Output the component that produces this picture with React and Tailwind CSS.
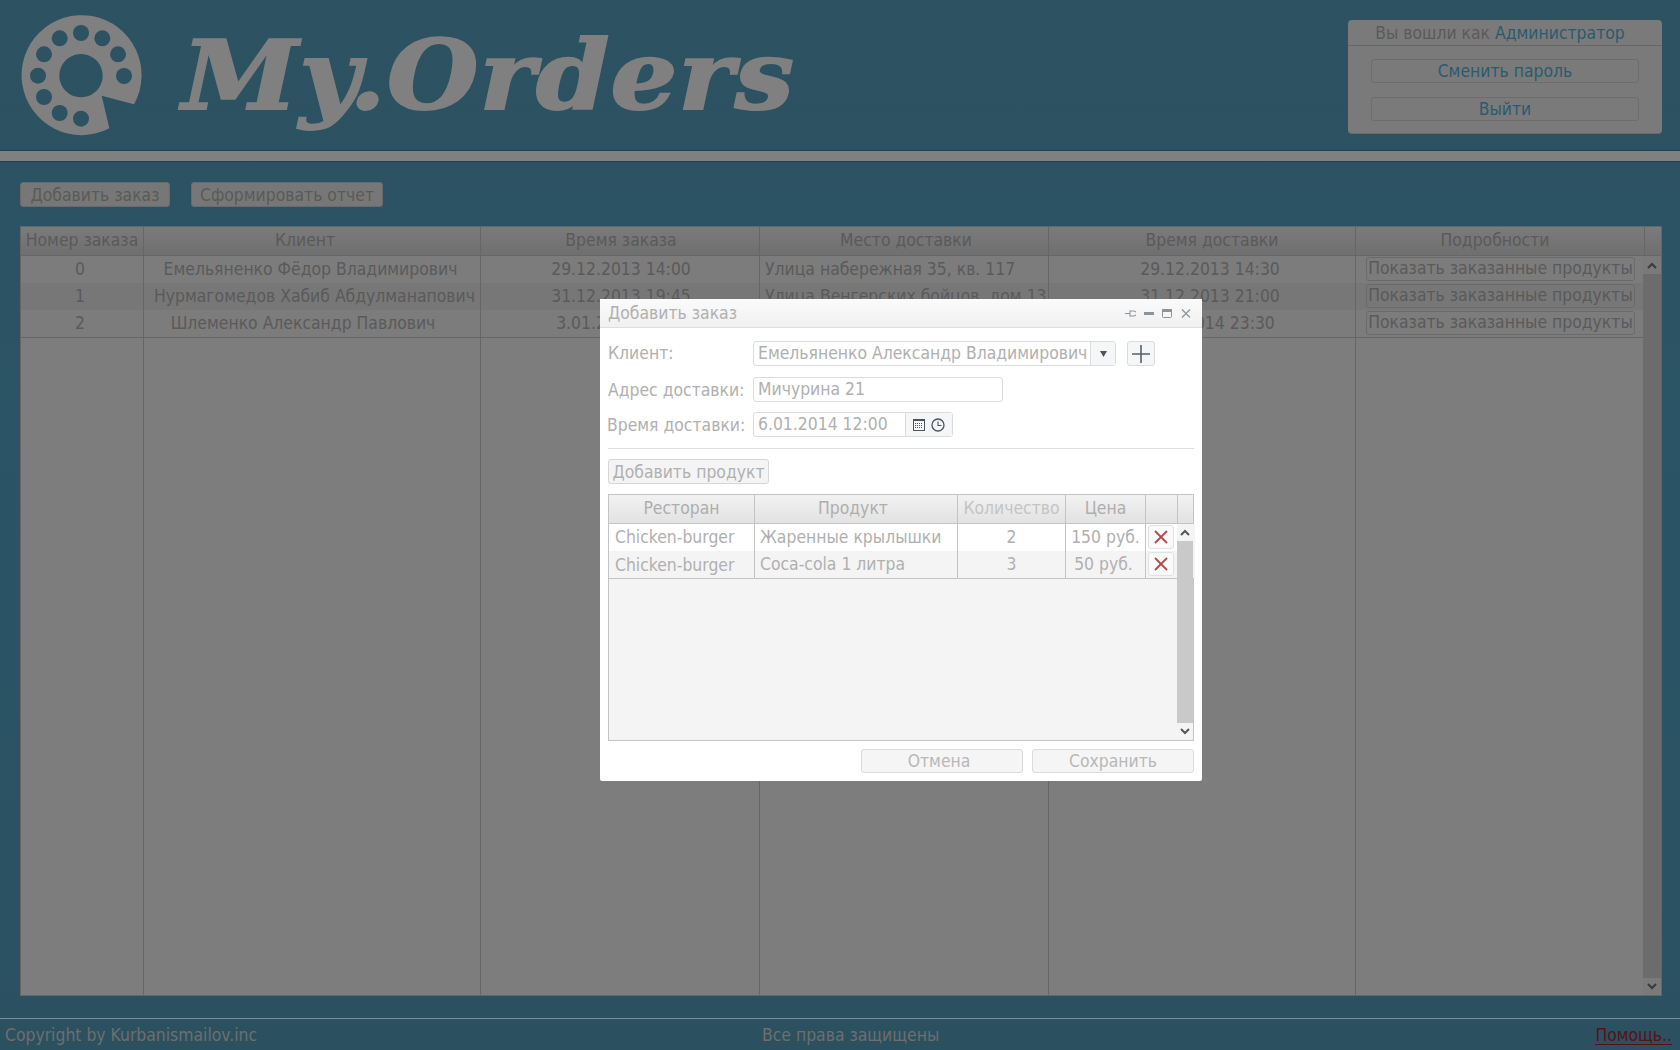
import React from "react";

const mainCols = "grid grid-cols-[123px_337px_279px_289px_307px_289px_18px]";
const dlgCols = "grid grid-cols-[146px_203px_108px_80px_32px_17px]";

function Logo() {
  const holes = [[213,84],[277,100],[324,148],[342,213],[149,100],[102,148],[84,212],[102,276],[149,324],[213,341]];
  return (
    <svg width="150" height="140" viewBox="0 0 450 420" className="shrink-0 ml-[10px] mt-[5px]">
      <path fill="#808080" fillRule="evenodd" d="M372 298A180 180 0 1 0 298 370L275 272ZM213 147a65 65 0 1 0 0.01 0Z" />
      {holes.map(([x, y]) => <circle key={x + "-" + y} cx={x} cy={y} r="24" fill="#2d5261" />)}
    </svg>
  );
}

function Chevron({ up, color = "#3a3a3a" }) {
  return (
    <svg width="10" height="7" viewBox="0 0 10 7">
      <path d={up ? "M1 6L5 2L9 6" : "M1 1L5 5L9 1"} fill="none" stroke={color} strokeWidth="2" />
    </svg>
  );
}

function Row({ cells, alt, nameCls = "" }) {
  return (
    <div className={`${mainCols} h-[27px] ${alt ? "bg-[#777777]" : "bg-[#7c7c7c]"}`}>
      <div className="text-center pr-[4px] border-r border-[#666]">{cells[0]}</div>
      <div className={`text-center whitespace-nowrap border-r border-[#666] ${nameCls}`}>{cells[1]}</div>
      <div className="text-center pl-[2px] border-r border-[#666]">{cells[2]}</div>
      <div className="pl-[5px] whitespace-nowrap overflow-hidden border-r border-[#666]">{cells[3]}</div>
      <div className="text-center pl-[16px] border-r border-[#666]">{cells[4]}</div>
      <div className="pl-[10px] pt-[1px]">
        <div className="w-[269px] h-[24px] flex items-center justify-center border border-[#6a6a6a] rounded-[3px] leading-none whitespace-nowrap">Показать заказанные продукты</div>
      </div>
    </div>
  );
}

function DlgRow({ r, p, q, c, alt }) {
  return (
    <div className={`${dlgCols} h-[27px] items-stretch leading-[26px] ${alt ? "bg-[#f4f4f4]" : "bg-white"}`}>
      <div className={`pl-[6px] border-r border-[#c4c4c4] ${alt ? "pt-[1px]" : ""}`}>{r}</div>
      <div className="pl-[5px] border-r border-[#c4c4c4]">{p}</div>
      <div className="text-center border-r border-[#c4c4c4]">{q}</div>
      <div className={`text-center border-r border-[#c4c4c4] whitespace-nowrap ${alt ? "pr-[4px]" : ""}`}>{c}</div>
      <div className="pl-[2px] pt-[1px]">
        <div className="w-[26px] h-[24px] flex items-center justify-center border border-[#e2e2e2] rounded-[3px] bg-[#fafafa]">
          <svg width="14" height="14" viewBox="0 0 14 14"><path d="M1 1L13 13M13 1L1 13" stroke="#b24a4a" strokeWidth="1.8" /></svg>
        </div>
      </div>
      <div className="bg-[#f4f4f4]" />
    </div>
  );
}

function Dialog() {
  return (
    <div className="absolute left-[600px] top-[299px] w-[602px] h-[482px] bg-white flex flex-col text-[#b0b0b0] rounded-[2px]">
      <div className="h-[29px] shrink-0 flex items-center justify-between pl-[8px] pr-[11px] border-b border-[#dedede] bg-gradient-to-b from-[#fbfbfb] to-[#f0f0f0]">
        <span>Добавить заказ</span>
        <div className="flex items-center gap-[8px] text-[#8a949c]">
          <svg width="11" height="9" viewBox="0 0 11 9"><path d="M0 4.5H5M5 1.5V7.5M5 2H9A2 2 0 0 1 9 7H5" fill="none" stroke="currentColor" /></svg>
          <svg width="10" height="9" viewBox="0 0 10 9"><rect x="0" y="3" width="10" height="3" fill="currentColor" /></svg>
          <svg width="11" height="9" viewBox="0 0 11 9"><rect x="0.5" y="0.5" width="9" height="8" rx="1" fill="none" stroke="currentColor" /><rect x="0" y="0" width="10" height="3" fill="currentColor" /></svg>
          <svg width="10" height="9" viewBox="0 0 10 9"><path d="M1 0.5L9 8.5M9 0.5L1 8.5" stroke="currentColor" strokeWidth="1.2" /></svg>
        </div>
      </div>

      <div className="flex flex-col pl-[8px] pr-[8px] pt-[13px] flex-1 min-h-0">
        <div className="flex items-center h-[25px]">
          <span className="w-[145px] mb-[2px]">Клиент:</span>
          <div className="w-[363px] h-[25px] flex border border-[#dcdcdc] rounded-[3px]">
            <span className="flex-1 pl-[4px] leading-[22px] whitespace-nowrap overflow-hidden">Емельяненко Александр Владимирович</span>
            <div className="w-[25px] flex items-center justify-center border-l border-[#dcdcdc] bg-[#f5f6f7]">
              <svg width="7" height="6" viewBox="0 0 7 6"><path d="M0 0H7L3.5 6Z" fill="#4a5560" /></svg>
            </div>
          </div>
          <div className="ml-[11px] w-[28px] h-[25px] flex items-center justify-center border border-[#dcdcdc] rounded-[3px] bg-[#f5f6f7]">
            <svg width="20" height="20" viewBox="0 0 20 20"><path d="M10 1V19M1 10H19" stroke="#56626e" strokeWidth="1.6" /></svg>
          </div>
        </div>
        <div className="flex items-center h-[25px] mt-[11px]">
          <span className="w-[145px] whitespace-nowrap">Адрес доставки:</span>
          <div className="w-[250px] h-[25px] pl-[4px] leading-[22px] border border-[#dcdcdc] rounded-[3px]">Мичурина 21</div>
        </div>
        <div className="flex items-center h-[25px] mt-[10px]">
          <span className="w-[145px] -ml-[1px] mr-[1px] whitespace-nowrap">Время доставки:</span>
          <div className="w-[200px] h-[25px] flex border border-[#dcdcdc] rounded-[3px]">
            <span className="flex-1 pl-[4px] leading-[22px]">6.01.2014 12:00</span>
            <div className="w-[47px] flex items-center justify-center gap-[6px] border-l border-[#dcdcdc] bg-[#f5f6f7]">
              <svg width="12" height="13" viewBox="0 0 12 13">
                <rect x="0.5" y="1.5" width="11" height="11" fill="none" stroke="#4a5560" />
                <rect x="0.5" y="1" width="11" height="2" fill="#4a5560" />
                <path d="M2 5.5H10M2 7.5H10M2 9.5H10" stroke="#4a5560" strokeWidth="1" strokeDasharray="1 1" />
              </svg>
              <svg width="14" height="14" viewBox="0 0 14 14">
                <circle cx="7" cy="7" r="6" fill="none" stroke="#4a5560" strokeWidth="1.3" />
                <path d="M7 3.5V7.5H10.5" fill="none" stroke="#4a5560" strokeWidth="1.1" />
              </svg>
            </div>
          </div>
        </div>
        <div className="h-px bg-[#dedede] mt-[11px]" />
        <div className="mt-[10px] w-[161px] h-[25px] flex items-center justify-center border border-[#d6d6d6] rounded-[3px] bg-[#f4f4f4] whitespace-nowrap">Добавить продукт</div>

        <div className="mt-[10px] h-[247px] flex flex-col border border-[#c4c4c4] bg-[#f4f4f4]">
          <div className={`${dlgCols} h-[29px] shrink-0 border-b border-[#c4c4c4] bg-gradient-to-b from-[#f2f2f2] to-[#e2e2e2] leading-[26px] text-center text-[#aeaeae]`}>
            <div className="border-r border-[#c4c4c4]">Ресторан</div>
            <div className="border-r border-[#c4c4c4] pr-[6px]">Продукт</div>
            <div className="border-r border-[#c4c4c4] text-[#c4c4c4] whitespace-nowrap">Количество</div>
            <div className="border-r border-[#c4c4c4]">Цена</div>
            <div className="border-r border-[#c4c4c4]" />
            <div />
          </div>
          <div className="relative flex-1 min-h-0">
            <div className="border-b border-[#c4c4c4]">
              <DlgRow r="Chicken-burger" p="Жаренные крылышки" q="2" c="150 руб." />
              <DlgRow r="Chicken-burger" p="Coca-cola 1 литра" q="3" c="50 руб." alt />
            </div>
            <div className="absolute right-0 top-0 bottom-0 w-[16px] flex flex-col bg-[#f4f4f4]">
              <div className="h-[17px] flex items-center justify-center"><Chevron up color="#555" /></div>
              <div className="flex-1 bg-[#c9c9c9]" />
              <div className="h-[17px] flex items-center justify-center"><Chevron color="#555" /></div>
            </div>
          </div>
        </div>

        <div className="flex justify-end gap-[9px] mt-[8px] text-[#b8b8b8]">
          <div className="w-[162px] h-[24px] flex items-center justify-center border border-[#dcdcdc] rounded-[3px] bg-[#f5f5f5] pr-[6px]">Отмена</div>
          <div className="w-[162px] h-[24px] flex items-center justify-center border border-[#dcdcdc] rounded-[3px] bg-[#f5f5f5]">Сохранить</div>
        </div>
      </div>
    </div>
  );
}

export default function App() {
  return (
    <div className="relative w-[1680px] h-[1050px] overflow-hidden flex flex-col text-[17.4px] leading-[26px] text-[#5a5a5a] bg-gradient-to-b from-[#2d5261] via-[#2a5466] to-[#2b5161] font-['DejaVu_Sans_Condensed','DejaVu_Sans',sans-serif]">
      <header className="h-[150px] shrink-0 flex items-start">
        <Logo />
        <div className="ml-[22px] mt-[11px] origin-left scale-x-[1.105] text-[#808080] text-[95px] leading-[130px] tracking-[1px] font-bold italic font-['DejaVu_Serif',serif] [-webkit-text-stroke:2px_#808080] whitespace-nowrap">My.Orders</div>
        <div className="ml-auto mr-[18px] mt-[20px] w-[314px] h-[114px] bg-[#7a7a7a] rounded-[4px] flex flex-col items-center border-b border-[#6a6a6a]">
          <div className="w-full h-[26px] pr-[10px] border-b border-[#666] text-center leading-[26px] whitespace-nowrap">Вы вошли как <span className="text-[#2b5a6e]">Администратор</span></div>
          <div className="mt-[13px] w-[268px] h-[24px] flex items-center justify-center border border-[#6d6d6d] rounded-[3px] text-[#2b5a6e]">Сменить пароль</div>
          <div className="mt-[14px] w-[268px] h-[24px] flex items-center justify-center border border-[#6d6d6d] rounded-[3px] text-[#2b5a6e]">Выйти</div>
        </div>
      </header>
      <div className="h-[12px] shrink-0 bg-[#808080] border-y border-[#24404c]" />

      <main className="flex-1 min-h-0 flex flex-col px-[20px] pr-[18px] pt-[20px]">
        <div className="flex gap-[21px] h-[25px] shrink-0">
          <div className="w-[150px] flex items-center justify-center bg-[#777] rounded-[3px] border border-[#6a6a6a]">Добавить заказ</div>
          <div className="w-[192px] flex items-center justify-center bg-[#777] rounded-[3px] border border-[#6a6a6a]">Сформировать отчет</div>
        </div>
        <div className="mt-[19px] h-[770px] shrink-0 flex flex-col border border-[#666] bg-[#7d7d7d] relative">
          <div className={`${mainCols} h-[29px] shrink-0 border-b border-[#666] bg-gradient-to-b from-[#7b7b7b] to-[#6f6f6f] text-center leading-[27px]`}>
            <div className="border-r border-[#666] whitespace-nowrap">Номер заказа</div>
            <div className="border-r border-[#666] pr-[14px]">Клиент</div>
            <div className="border-r border-[#666] pl-[2px]">Время заказа</div>
            <div className="border-r border-[#666] pl-[4px]">Место доставки</div>
            <div className="border-r border-[#666] pl-[20px]">Время доставки</div>
            <div className="border-r border-[#666] pr-[10px]">Подробности</div>
            <div />
          </div>
          <div className="border-b border-[#666]">
            <Row nameCls="pr-[3px]" cells={["0", "Емельяненко Фёдор Владимирович", "29.12.2013 14:00", "Улица набережная 35, кв. 117", "29.12.2013 14:30"]} />
            <Row alt nameCls="pl-[5px]" cells={["1", "Нурмагомедов Хабиб Абдулманапович", "31.12.2013 19:45", "Улица Венгерских бойцов, дом 13", "31.12.2013 21:00"]} />
            <Row nameCls="pr-[18px]" cells={["2", "Шлеменко Александр Павлович", "3.01.2014 22:00", "", "3.01.2014 23:30"]} />
          </div>
          <div className={`${mainCols} flex-1`}>
            <div className="border-r border-[#666]" />
            <div className="border-r border-[#666]" />
            <div className="border-r border-[#666]" />
            <div className="border-r border-[#666]" />
            <div className="border-r border-[#666]" />
            <div />
            <div />
          </div>
          <div className="absolute right-0 top-[29px] bottom-0 w-[18px] flex flex-col bg-[#7a7a7a]">
            <div className="h-[18px] flex items-center justify-center"><Chevron up /></div>
            <div className="flex-1 bg-[#6c6c6c]" />
            <div className="h-[17px] flex items-center justify-center"><Chevron /></div>
          </div>
        </div>
      </main>

      <footer className="h-[32px] shrink-0 relative grid grid-cols-[757px_1fr_auto] items-center border-t border-[#7d8d93] text-[#6e6e6e] pl-[5px] pr-[8px]">
        <span>Copyright by Kurbanismailov.inc</span>
        <span>Все права защищены</span>
        <span className="text-[#5a1015] underline underline-offset-[3px]">Помощь..</span>
      </footer>

      <Dialog />
    </div>
  );
}
